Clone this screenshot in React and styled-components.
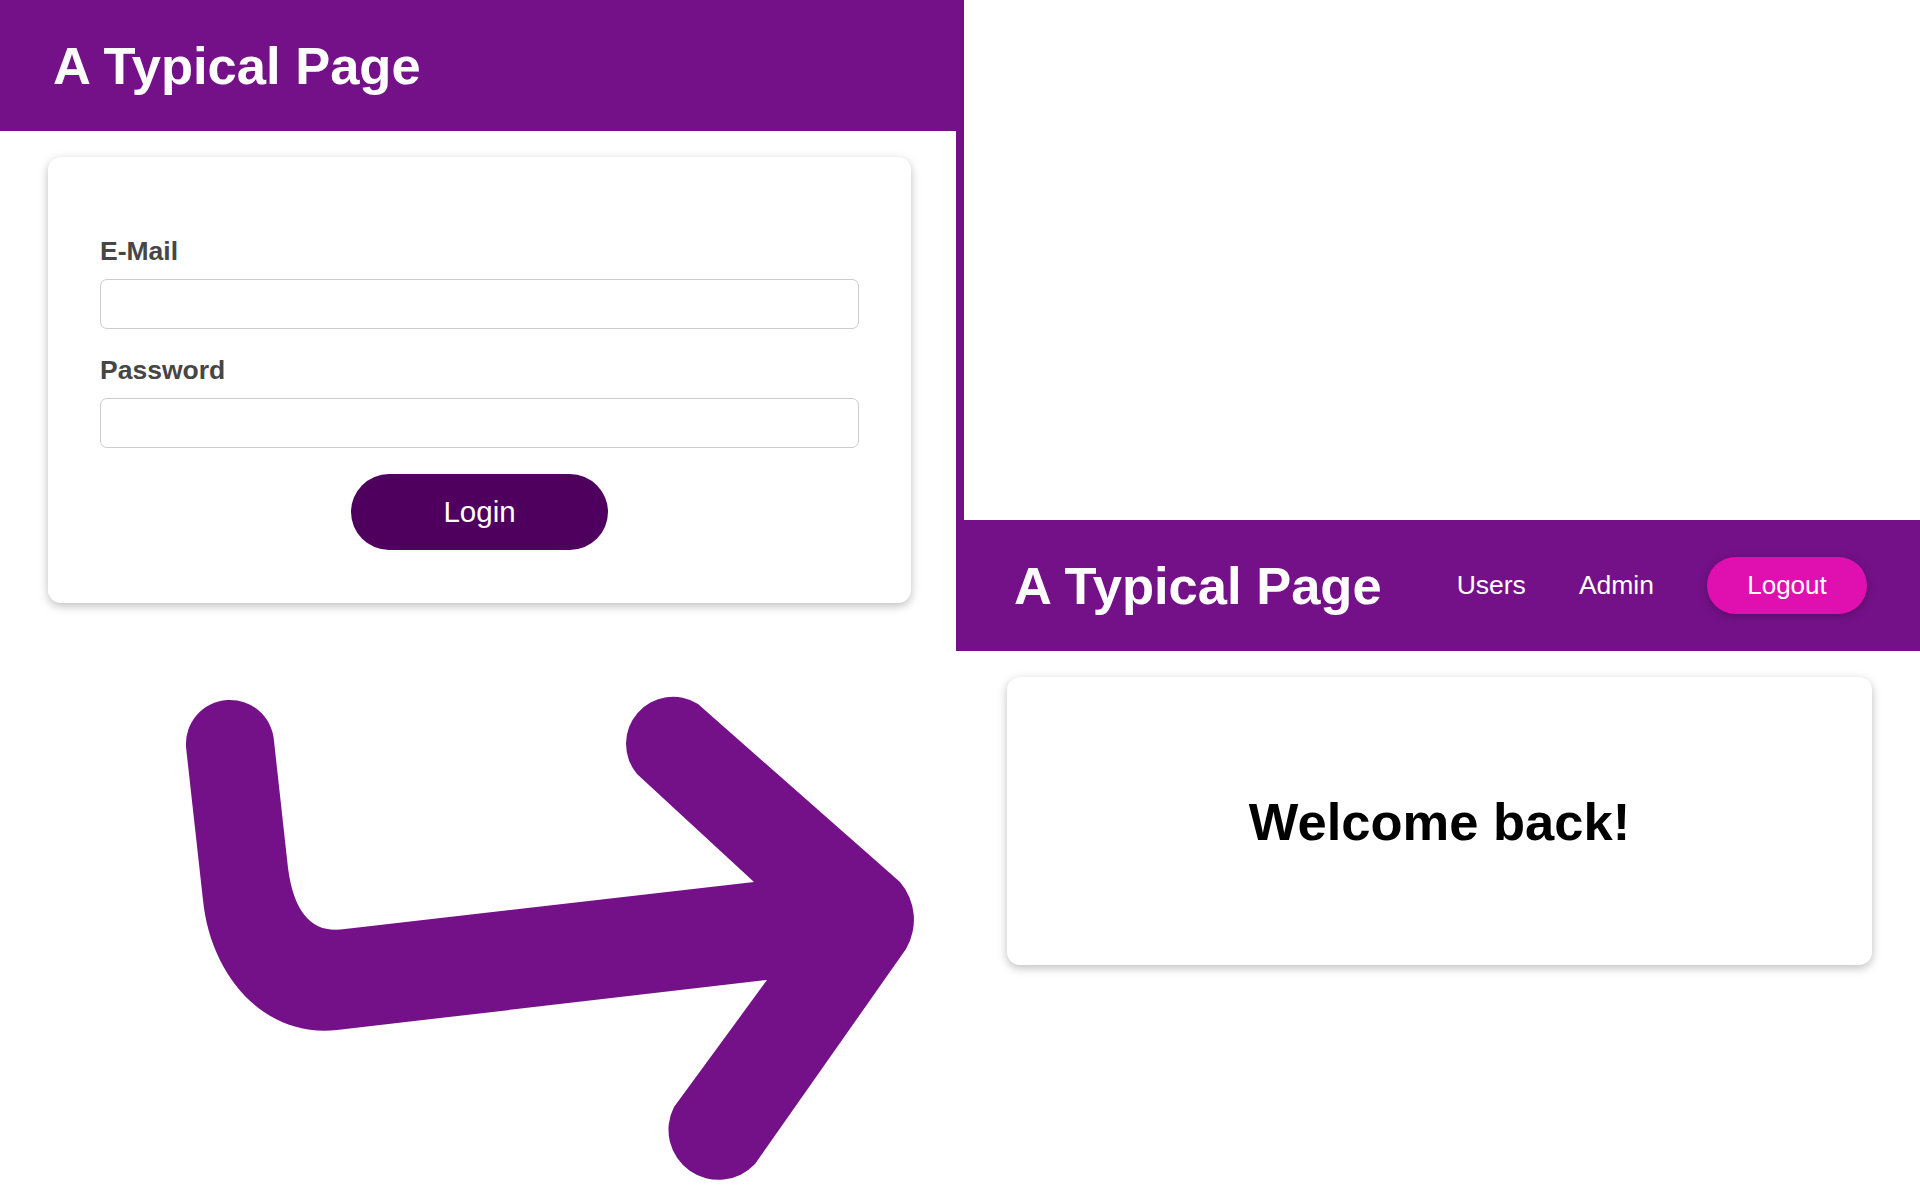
import React from 'react';
import styled, { createGlobalStyle } from 'styled-components';

const purple = '#741188';

const GlobalStyle = createGlobalStyle`
  html, body {
    margin: 0;
    padding: 0;
    overflow: hidden;
    background: #fff;
  }
  * {
    box-sizing: border-box;
  }
  body {
    font-family: 'Liberation Sans', Arial, sans-serif;
  }
`;

const Page = styled.div`
  display: flex;
  width: 1920px;
  height: 1200px;
`;

const LeftPane = styled.div`
  width: 956px;
  flex-shrink: 0;
  display: flex;
  flex-direction: column;
`;

const RightPane = styled.div`
  width: 964px;
  flex-shrink: 0;
  display: flex;
  flex-direction: column;
`;

const Blank = styled.div`
  height: 520px;
  border-left: 8px solid ${purple};
`;

const Header = styled.header`
  height: 131px;
  flex-shrink: 0;
  background: ${purple};
  display: flex;
  align-items: center;
  justify-content: space-between;
  padding: 0 53px 0 ${(p) => p.$left}px;
`;

const Title = styled.h1`
  margin: 0;
  color: #fff;
  font-size: 52.5px;
  font-weight: bold;
  white-space: nowrap;
`;

const Nav = styled.nav`
  display: flex;
  align-items: center;
  gap: 53px;
`;

const NavLink = styled.a`
  color: #fff;
  font-size: 26.5px;
  text-decoration: none;
`;

const LogoutButton = styled.button`
  width: 160px;
  height: 57px;
  border: none;
  border-radius: 29px;
  background: #df10af;
  color: #fff;
  font-family: inherit;
  font-size: 26px;
  box-shadow: 0 2px 8px rgba(0, 0, 0, 0.26);
`;

const Card = styled.div`
  background: #fff;
  border-radius: 13px;
  box-shadow: 0 3px 10px rgba(0, 0, 0, 0.26);
  margin: 26px ${(p) => p.$right}px 0 ${(p) => p.$left}px;
  height: ${(p) => p.$height}px;
  flex-shrink: 0;
`;

const LoginCard = styled(Card)`
  padding: 79px 52px 0;
`;

const WelcomeCard = styled(Card)`
  display: flex;
  align-items: center;
  justify-content: center;
`;

const Welcome = styled.h2`
  margin: 0;
  font-size: 52.5px;
  font-weight: bold;
  color: #000;
`;

const Control = styled.div`
  display: flex;
  flex-direction: column;
  margin-bottom: 26px;
`;

const Label = styled.label`
  font-size: 26.5px;
  font-weight: bold;
  color: #464646;
  margin-bottom: 12px;
`;

const Input = styled.input`
  height: 50px;
  border: 1.5px solid #ccc;
  border-radius: 7px;
  font-family: inherit;
  font-size: 22px;
  padding: 0 10px;
`;

const Actions = styled.div`
  display: flex;
  justify-content: center;
`;

const LoginButton = styled.button`
  width: 257px;
  height: 76px;
  border: none;
  border-radius: 38px;
  background: #4f005f;
  color: #fff;
  font-family: inherit;
  font-size: 29.5px;
`;

const Arrow = styled.svg`
  display: block;
  flex-shrink: 0;
`;

const arrowPath = [
  'M186 747',
  'A44 44 0 0 1 274 741',
  'L288 868',
  'Q297 937 345 929',
  'L754 882',
  'L637 774',
  'A47 47 0 0 1 698 704',
  'L900 882',
  'A58 58 0 0 1 906 949',
  'L755 1164',
  'A50 50 0 0 1 674 1107',
  'L767 980',
  'L337 1030',
  'C261 1038 210 972 203 900',
  'Z',
].join(' ');

const App = () => {
  return (
    <>
      <GlobalStyle />
      <Page>
        <LeftPane>
          <Header $left={53}>
            <Title>A Typical Page</Title>
          </Header>
          <LoginCard $left={48} $right={45} $height={446}>
            <Control>
              <Label htmlFor="email">E-Mail</Label>
              <Input id="email" type="email" />
            </Control>
            <Control>
              <Label htmlFor="password">Password</Label>
              <Input id="password" type="password" />
            </Control>
            <Actions>
              <LoginButton>Login</LoginButton>
            </Actions>
          </LoginCard>
          <Arrow width="956" height="597" viewBox="0 603 956 597">
            <path d={arrowPath} fill={purple} />
          </Arrow>
        </LeftPane>
        <RightPane>
          <Blank />
          <Header $left={58}>
            <Title>A Typical Page</Title>
            <Nav>
              <NavLink href="#">Users</NavLink>
              <NavLink href="#">Admin</NavLink>
              <LogoutButton>Logout</LogoutButton>
            </Nav>
          </Header>
          <WelcomeCard $left={51} $right={48} $height={288}>
            <Welcome>Welcome back!</Welcome>
          </WelcomeCard>
        </RightPane>
      </Page>
    </>
  );
};

export default App;
